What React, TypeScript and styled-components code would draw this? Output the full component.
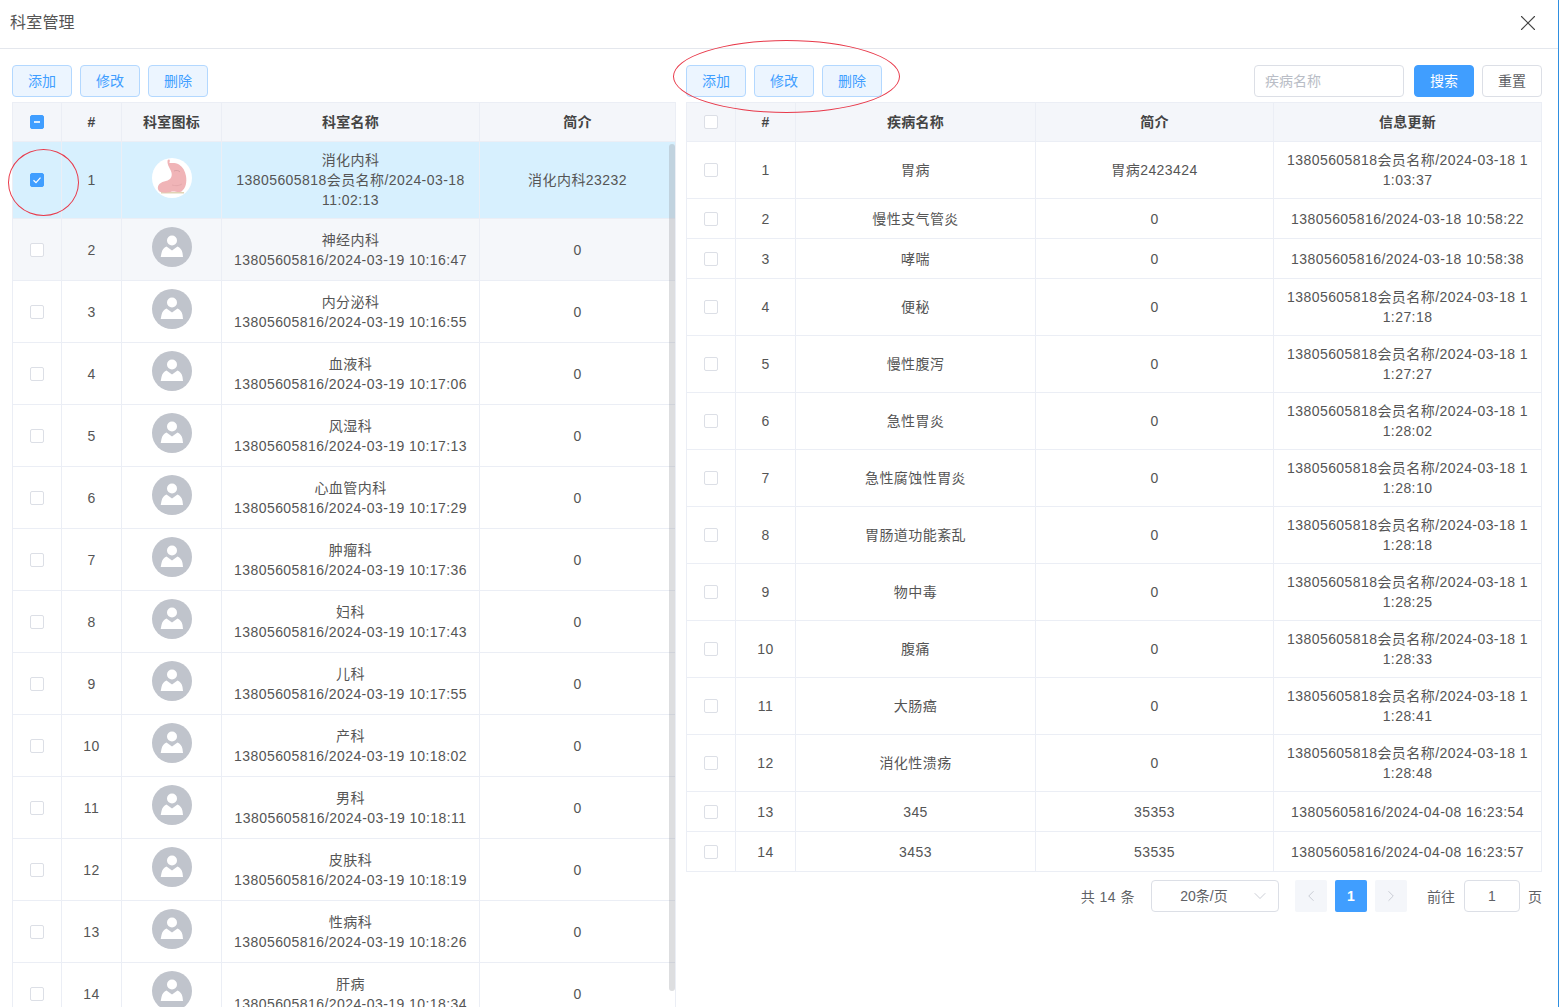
import React from 'react';
import styled, { createGlobalStyle } from 'styled-components';
import { ChevronDown, ChevronLeft, ChevronRight, X } from 'lucide-react';

const GlobalStyle = createGlobalStyle`
  html, body {
    margin: 0;
    padding: 0;
    height: 100%;
    overflow: hidden;
    background: #fff;
  }
  body {
    font-family: "Liberation Sans", "Noto Sans CJK SC", sans-serif;
    font-size: 14px;
    color: #606266;
  }
  * {
    box-sizing: border-box;
  }
`;

const Page = styled.div`
  position: relative;
  display: flex;
  flex-direction: column;
  width: 1559px;
  height: 1007px;
  overflow: hidden;
  border-right: 1px solid #2f8fe0;
`;

const Header = styled.header`
  display: flex;
  align-items: center;
  justify-content: space-between;
  flex: none;
  height: 49px;
  padding: 0 17px 2px 10px;
  border-bottom: 1px solid #e4e7ed;
`;

const Title = styled.h1`
  margin: 0;
  font-size: 16px;
  font-weight: 400;
  line-height: 24px;
  letter-spacing: 0.2px;
  color: #555;
`;

const CloseButton = styled.button`
  display: flex;
  width: 26px;
  height: 26px;
  padding: 0;
  border: 0;
  background: transparent;
  color: #444;
`;

const Content = styled.main`
  display: flex;
  align-items: flex-start;
  gap: 10px;
  flex: 1;
  min-height: 0;
  padding: 16px 16px 0 12px;
`;

const Panel = styled.section<{ $width: number }>`
  display: flex;
  flex-direction: column;
  flex: none;
  width: ${({ $width }) => $width}px;
`;

const Toolbar = styled.div`
  display: flex;
  align-items: center;
  gap: 8px;
  height: 32px;
  margin-bottom: 5px;
`;

const Spacer = styled.div`
  flex: 1;
`;

const PlainButton = styled.button`
  width: 60px;
  height: 32px;
  padding: 0 0 2px;
  border: 1px solid #b3d8ff;
  border-radius: 4px;
  background: #ecf5ff;
  color: #409eff;
  font: inherit;
  font-size: 14px;
`;

const SolidButton = styled(PlainButton)`
  margin-left: 2px;
  border-color: #409eff;
  background: #409eff;
  color: #fff;
`;

const DefaultButton = styled(PlainButton)`
  border-color: #dcdfe6;
  background: #fff;
  color: #606266;
`;

const SearchInput = styled.input`
  width: 150px;
  height: 32px;
  padding: 0 10px;
  border: 1px solid #dcdfe6;
  border-radius: 4px;
  font: inherit;
  font-size: 14px;
  outline: none;

  &::placeholder {
    color: #b9bdc6;
    opacity: 1;
  }
`;

const TableFrame = styled.div`
  position: relative;
  border-top: 1px solid #ebeef5;
  border-left: 1px solid #ebeef5;
`;

const Table = styled.table`
  width: 100%;
  border-collapse: separate;
  border-spacing: 0;
  table-layout: fixed;
`;

const HeadCell = styled.th`
  height: 39px;
  padding: 0 10px;
  border-right: 1px solid #ebeef5;
  border-bottom: 1px solid #ebeef5;
  background: #f4f6fa;
  color: #444;
  font-size: 14px;
  font-weight: 700;
  line-height: 20px;
  letter-spacing: 0.3px;
  text-align: center;
`;

const Row = styled.tr<{ $tone?: 'selected' | 'hover' }>`
  background: ${({ $tone }) =>
    $tone === 'selected' ? '#d7f0fe' : $tone === 'hover' ? '#f5f7fa' : '#fff'};
`;

const Cell = styled.td<{ $height: number; $breakAll?: boolean }>`
  height: ${({ $height }) => $height}px;
  padding: 0 10px;
  border-right: 1px solid #ebeef5;
  border-bottom: 1px solid #ebeef5;
  color: #555;
  font-size: 14px;
  line-height: 20px;
  letter-spacing: 0.43px;
  text-align: center;
  vertical-align: middle;
  word-break: ${({ $breakAll }) => ($breakAll ? 'break-all' : 'normal')};
`;

const CheckBox = styled.span<{ $state?: 'checked' | 'partial' }>`
  display: flex;
  align-items: center;
  justify-content: center;
  width: 14px;
  height: 14px;
  margin: 0 auto;
  border: 1px solid ${({ $state }) => ($state ? '#409eff' : '#dcdfe6')};
  border-radius: 2px;
  background: ${({ $state }) => ($state ? '#409eff' : '#fff')};
`;

const PartialMark = styled.span`
  width: 6px;
  height: 2px;
  background: #fff;
  opacity: 0.8;
`;

const AvatarBox = styled.svg`
  display: block;
  width: 40px;
  height: 40px;
  margin: 0 auto 5px;
`;

const ScrollThumb = styled.div`
  position: absolute;
  top: 41px;
  right: 1px;
  width: 6px;
  height: 847px;
  border-radius: 3px;
  background: rgba(144, 147, 153, 0.3);
`;

const Pagination = styled.nav`
  display: flex;
  align-items: center;
  justify-content: flex-end;
  height: 32px;
  margin-top: 8px;
  color: #606266;
`;

const TotalLabel = styled.span`
  letter-spacing: 0.5px;
`;

const PageSize = styled.div`
  position: relative;
  width: 128px;
  height: 32px;
  margin: 0 16px;
  padding-right: 22px;
  border: 1px solid #dcdfe6;
  border-radius: 4px;
  line-height: 30px;
  text-align: center;
`;

const PageSizeArrow = styled.span`
  position: absolute;
  top: 5px;
  right: 8px;
  display: flex;
  color: #c0c4cc;
`;

const PagerButton = styled.div<{ $active?: boolean }>`
  display: flex;
  align-items: center;
  justify-content: center;
  width: 32px;
  height: 32px;
  margin-right: 8px;
  border-radius: 2px;
  background: ${({ $active }) => ($active ? '#409eff' : '#f4f6fa')};
  color: ${({ $active }) => ($active ? '#fff' : '#c0c4cc')};
  font-size: 14px;
  font-weight: 700;
`;

const GotoLabel = styled.span`
  margin-left: 12px;
  margin-right: 9px;
`;

const GotoInput = styled.div`
  width: 56px;
  height: 32px;
  margin-right: 8px;
  border: 1px solid #dcdfe6;
  border-radius: 4px;
  line-height: 30px;
  text-align: center;
`;

const Mark = styled.div`
  position: absolute;
  border: 1px solid #e8394a;
  border-radius: 50%;
  pointer-events: none;
`;

const CheckboxMark = styled(Mark)`
  left: 8px;
  top: 149px;
  width: 71px;
  height: 67px;
`;

const ToolbarMark = styled(Mark)`
  left: 673px;
  top: 40px;
  width: 227px;
  height: 73px;
`;

const PersonAvatar = () => (
  <AvatarBox viewBox="0 0 40 40">
    <circle cx="20" cy="20" r="20" fill="#c0c4cc" />
    <circle cx="20" cy="13.5" r="5" fill="#fff" />
    <path
      d="M8.7 30 L9.5 26 C10 23 12 20.5 14.5 19.5 L20 23.5 L25.5 19.5 C28 20.5 30 23 30.5 26 L31 30 Z"
      fill="#fff"
    />
  </AvatarBox>
);

const StomachAvatar = () => (
  <AvatarBox viewBox="0 0 40 40">
    <circle cx="20" cy="20" r="20" fill="#fff" />
    <path d="M9 34 H32 V35.5 H9 Z" fill="#e0d3b4" />
    <path
      d="M15.5 2.5 C16.5 1 18 1.5 17.8 3 L17.4 5 C20 5 24 4.5 27 6.5 C31 9 33 13 34 18 C35 24 34 30 29.5 33.5 C26 35 23 33 20 33.5 C16 35 10 35 7.5 33.5 C5 31 5.5 27.5 8 25.5 C11 23 15 23.5 18 21 C20.5 18.5 20 15 18.5 12 C17 9 15 6 15.5 2.5 Z"
      fill="#f0b4b7"
    />
    <path d="M22 13 C24 12 27 12.5 28 14" fill="none" stroke="#cf9a9d" strokeWidth="0.7" />
    <path d="M20 27 C23 28 27 28 30 26" fill="none" stroke="#dfa3a7" strokeWidth="0.7" />
  </AvatarBox>
);

const CheckedMark = () => (
  <svg width="10" height="10" viewBox="0 0 10 10">
    <path d="M1.5 5.2 L4 7.6 L8.5 2.6" fill="none" stroke="#fff" strokeWidth="1.2" />
  </svg>
);

const departments = [
  ['神经内科', '13805605816/2024-03-19 10:16:47'],
  ['内分泌科', '13805605816/2024-03-19 10:16:55'],
  ['血液科', '13805605816/2024-03-19 10:17:06'],
  ['风湿科', '13805605816/2024-03-19 10:17:13'],
  ['心血管内科', '13805605816/2024-03-19 10:17:29'],
  ['肿瘤科', '13805605816/2024-03-19 10:17:36'],
  ['妇科', '13805605816/2024-03-19 10:17:43'],
  ['儿科', '13805605816/2024-03-19 10:17:55'],
  ['产科', '13805605816/2024-03-19 10:18:02'],
  ['男科', '13805605816/2024-03-19 10:18:11'],
  ['皮肤科', '13805605816/2024-03-19 10:18:19'],
  ['性病科', '13805605816/2024-03-19 10:18:26'],
  ['肝病', '13805605816/2024-03-19 10:18:34'],
];

const diseases = [
  { name: '胃病', intro: '胃病2423424', info: '13805605818会员名称/2024-03-18 11:03:37', height: 57 },
  { name: '慢性支气管炎', intro: '0', info: '13805605816/2024-03-18 10:58:22', height: 40 },
  { name: '哮喘', intro: '0', info: '13805605816/2024-03-18 10:58:38', height: 40 },
  { name: '便秘', intro: '0', info: '13805605818会员名称/2024-03-18 11:27:18', height: 57 },
  { name: '慢性腹泻', intro: '0', info: '13805605818会员名称/2024-03-18 11:27:27', height: 57 },
  { name: '急性胃炎', intro: '0', info: '13805605818会员名称/2024-03-18 11:28:02', height: 57 },
  { name: '急性腐蚀性胃炎', intro: '0', info: '13805605818会员名称/2024-03-18 11:28:10', height: 57 },
  { name: '胃肠道功能紊乱', intro: '0', info: '13805605818会员名称/2024-03-18 11:28:18', height: 57 },
  { name: '物中毒', intro: '0', info: '13805605818会员名称/2024-03-18 11:28:25', height: 57 },
  { name: '腹痛', intro: '0', info: '13805605818会员名称/2024-03-18 11:28:33', height: 57 },
  { name: '大肠癌', intro: '0', info: '13805605818会员名称/2024-03-18 11:28:41', height: 57 },
  { name: '消化性溃疡', intro: '0', info: '13805605818会员名称/2024-03-18 11:28:48', height: 57 },
  { name: '345', intro: '35353', info: '13805605816/2024-04-08 16:23:54', height: 40 },
  { name: '3453', intro: '53535', info: '13805605816/2024-04-08 16:23:57', height: 40 },
];

const DepartmentTable = () => (
  <TableFrame>
    <Table>
      <colgroup>
        <col width="49" />
        <col width="60" />
        <col width="100" />
        <col width="258" />
        <col width="196" />
      </colgroup>
      <thead>
        <tr>
          <HeadCell>
            <CheckBox $state="partial">
              <PartialMark />
            </CheckBox>
          </HeadCell>
          <HeadCell>#</HeadCell>
          <HeadCell>科室图标</HeadCell>
          <HeadCell>科室名称</HeadCell>
          <HeadCell>简介</HeadCell>
        </tr>
      </thead>
      <tbody>
        <Row $tone="selected">
          <Cell $height={77}>
            <CheckBox $state="checked">
              <CheckedMark />
            </CheckBox>
          </Cell>
          <Cell $height={77}>1</Cell>
          <Cell $height={77}>
            <StomachAvatar />
          </Cell>
          <Cell $height={77}>消化内科<br />13805605818会员名称/2024-03-18 11:02:13</Cell>
          <Cell $height={77}>消化内科23232</Cell>
        </Row>
        {departments.map(([name, info], i) => (
          <Row key={name} $tone={i === 0 ? 'hover' : undefined}>
            <Cell $height={62}>
              <CheckBox />
            </Cell>
            <Cell $height={62}>{i + 2}</Cell>
            <Cell $height={62}>
              <PersonAvatar />
            </Cell>
            <Cell $height={62}>{name}<br />{info}</Cell>
            <Cell $height={62}>0</Cell>
          </Row>
        ))}
      </tbody>
    </Table>
    <ScrollThumb />
  </TableFrame>
);

const DiseaseTable = () => (
  <TableFrame>
    <Table>
      <colgroup>
        <col width="49" />
        <col width="60" />
        <col width="240" />
        <col width="238" />
        <col width="268" />
      </colgroup>
      <thead>
        <tr>
          <HeadCell>
            <CheckBox />
          </HeadCell>
          <HeadCell>#</HeadCell>
          <HeadCell>疾病名称</HeadCell>
          <HeadCell>简介</HeadCell>
          <HeadCell>信息更新</HeadCell>
        </tr>
      </thead>
      <tbody>
        {diseases.map((d, i) => (
          <Row key={d.name}>
            <Cell $height={d.height}>
              <CheckBox />
            </Cell>
            <Cell $height={d.height}>{i + 1}</Cell>
            <Cell $height={d.height}>{d.name}</Cell>
            <Cell $height={d.height}>{d.intro}</Cell>
            <Cell $height={d.height} $breakAll>{d.info}</Cell>
          </Row>
        ))}
      </tbody>
    </Table>
  </TableFrame>
);

export default function App() {
  return (
    <Page>
      <GlobalStyle />
      <Header>
        <Title>科室管理</Title>
        <CloseButton aria-label="关闭">
          <X size={26} strokeWidth={1} />
        </CloseButton>
      </Header>
      <Content>
        <Panel $width={664}>
          <Toolbar>
            <PlainButton>添加</PlainButton>
            <PlainButton>修改</PlainButton>
            <PlainButton>删除</PlainButton>
          </Toolbar>
          <DepartmentTable />
        </Panel>
        <Panel $width={856}>
          <Toolbar>
            <PlainButton>添加</PlainButton>
            <PlainButton>修改</PlainButton>
            <PlainButton>删除</PlainButton>
            <Spacer />
            <SearchInput placeholder="疾病名称" />
            <SolidButton>搜索</SolidButton>
            <DefaultButton>重置</DefaultButton>
          </Toolbar>
          <DiseaseTable />
          <Pagination>
            <TotalLabel>共 14 条</TotalLabel>
            <PageSize>
              20条/页
              <PageSizeArrow>
                <ChevronDown size={20} strokeWidth={1} />
              </PageSizeArrow>
            </PageSize>
            <PagerButton>
              <ChevronLeft size={18} strokeWidth={1.1} />
            </PagerButton>
            <PagerButton $active>1</PagerButton>
            <PagerButton>
              <ChevronRight size={18} strokeWidth={1.1} />
            </PagerButton>
            <GotoLabel>前往</GotoLabel>
            <GotoInput>1</GotoInput>
            <span>页</span>
          </Pagination>
        </Panel>
      </Content>
      <CheckboxMark />
      <ToolbarMark />
    </Page>
  );
}
